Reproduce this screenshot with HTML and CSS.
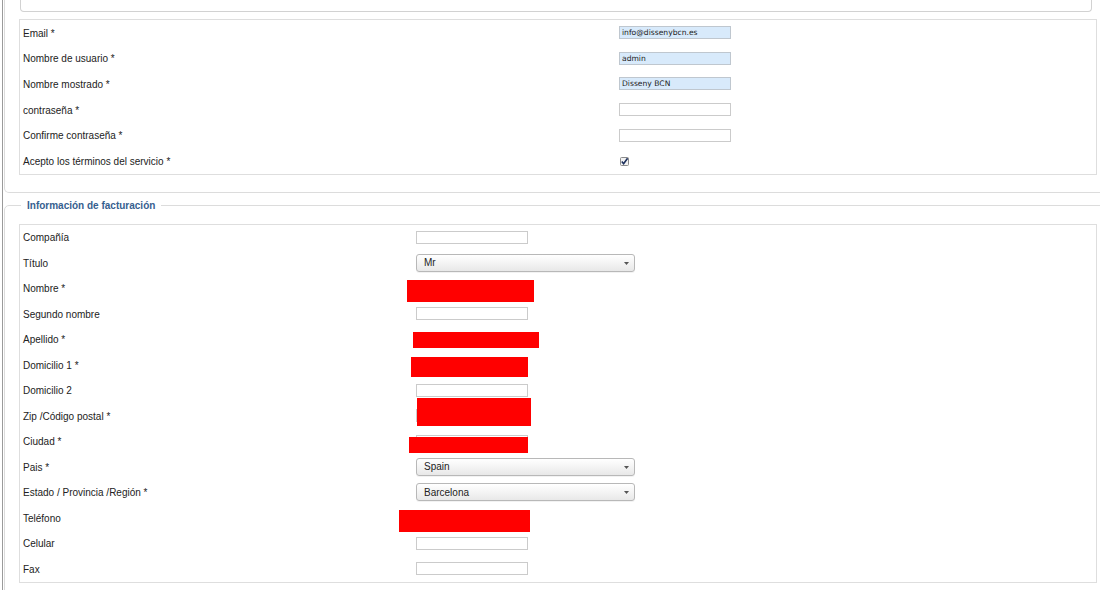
FILE: index.html
```html
<!DOCTYPE html>
<html lang="es">
    <head>
        <meta charset="UTF-8">
        <title>Registro - Disseny BCN</title>
        <link rel="stylesheet" href="styles.css">
    </head>
    <body>
        <div class="page">
            <div class="account">
                <div class="prev-box"></div>

                <div class="form-box account-rows">
                    <div class="row"><label class="label">Email *</label><div class="field"><input class="text filled" type="text" value="info@dissenybcn.es"></div></div>
                    <div class="row"><label class="label">Nombre de usuario *</label><div class="field"><input class="text filled" type="text" value="admin"></div></div>
                    <div class="row"><label class="label">Nombre mostrado *</label><div class="field"><input class="text filled" type="text" value="Disseny BCN"></div></div>
                    <div class="row"><label class="label">contraseña *</label><div class="field"><input class="text" type="password"></div></div>
                    <div class="row"><label class="label">Confirme contraseña *</label><div class="field"><input class="text" type="password"></div></div>
                    <div class="row">
                        <label class="label">Acepto los términos del servicio *</label>
                        <div class="field">
                            <span class="check">
                                <svg width="9" height="9" viewBox="0 0 9 9">
                                    <rect x="0.5" y="0.5" width="8" height="8" rx="1" fill="#f2f2f2" stroke="#8a8a8a"/>
                                    <path d="M1.8 4.6 L3.6 6.8 L7.6 1.2" fill="none" stroke="#1c2f5c" stroke-width="1.6"/>
                                </svg>
                            </span>
                        </div>
                    </div>
                </div>
            </div>

            <fieldset class="billing">
                <legend>Información de facturación</legend>
                <div class="form-box billing-rows">
                    <div class="row"><label class="label">Compañía</label><div class="field"><input class="text" type="text"></div></div>
                    <div class="row">
                        <label class="label">Título</label>
                        <div class="field">
                            <span class="select-wrap">
                                <select><option>Mr</option><option>Mrs</option><option>Ms</option></select>
                                <svg class="arrow" width="5" height="3" viewBox="0 0 5 3"><path d="M0 0 H5 L2.5 3 Z" fill="#555"/></svg>
                            </span>
                        </div>
                    </div>
                    <div class="row"><label class="label">Nombre *</label><div class="field"><input class="text" type="text"><span class="redact redact-nombre"></span></div></div>
                    <div class="row"><label class="label">Segundo nombre</label><div class="field"><input class="text" type="text"></div></div>
                    <div class="row"><label class="label">Apellido *</label><div class="field"><input class="text" type="text"><span class="redact redact-apellido"></span></div></div>
                    <div class="row"><label class="label">Domicilio 1 *</label><div class="field"><input class="text" type="text"><span class="redact redact-domicilio"></span></div></div>
                    <div class="row"><label class="label">Domicilio 2</label><div class="field"><input class="text" type="text"></div></div>
                    <div class="row"><label class="label">Zip /Código postal *</label><div class="field"><input class="text" type="text"><span class="redact redact-zip"></span></div></div>
                    <div class="row"><label class="label">Ciudad *</label><div class="field"><input class="text" type="text"><span class="redact redact-ciudad"></span></div></div>
                    <div class="row">
                        <label class="label">Pais *</label>
                        <div class="field">
                            <span class="select-wrap">
                                <select><option>Spain</option><option>France</option><option>Portugal</option></select>
                                <svg class="arrow" width="5" height="3" viewBox="0 0 5 3"><path d="M0 0 H5 L2.5 3 Z" fill="#555"/></svg>
                            </span>
                        </div>
                    </div>
                    <div class="row">
                        <label class="label">Estado / Provincia /Región *</label>
                        <div class="field">
                            <span class="select-wrap">
                                <select><option>Barcelona</option><option>Girona</option><option>Lleida</option><option>Tarragona</option></select>
                                <svg class="arrow" width="5" height="3" viewBox="0 0 5 3"><path d="M0 0 H5 L2.5 3 Z" fill="#555"/></svg>
                            </span>
                        </div>
                    </div>
                    <div class="row"><label class="label">Teléfono</label><div class="field"><input class="text" type="text"><span class="redact redact-telefono"></span></div></div>
                    <div class="row"><label class="label">Celular</label><div class="field"><input class="text" type="text"></div></div>
                    <div class="row"><label class="label">Fax</label><div class="field"><input class="text" type="text"></div></div>
                </div>
            </fieldset>
        </div>
    </body>
</html>
```

FILE: styles.css
```css
html, body {
    margin: 0;
    overflow: hidden;
    background-color: #fff;
}

body {
    font-family: "Liberation Sans", Arial, sans-serif;
    font-size: 10px;
    color: #222;
}

.page {
    margin-left: 2px;
    border-left: 1px solid #9a9a9a;
    width: 1130px;
    min-height: 600px;
}

/* first block, scrolled so only its bottom shows */
.account {
    width: 1078px;
    margin-left: 1px;
    padding: 0 14px 17px 14px;
    border: 1px solid #dcdcdc;
    border-top: none;
    border-radius: 0 0 5px 5px;
}

.prev-box {
    height: 11px;
    margin: 0 5px 0 1px;
    border: 1px solid #d2d2d2;
    border-top: none;
    border-radius: 0 0 4px 4px;
}

.form-box {
    border: 1px solid #dedede;
}

.account-rows {
    margin-top: 7px;
}

.row {
    display: flex;
    align-items: center;
}

.account-rows .row {
    height: 25.6px;
}

.billing-rows .row {
    height: 25.5px;
}

.label {
    box-sizing: border-box;
    padding: 1px 0 0 3px;
    flex-shrink: 0;
}

.account-rows .label {
    width: 599px;
}

.billing-rows .label {
    width: 396px;
}

.field {
    position: relative;
    align-self: stretch;
    display: flex;
    align-items: center;
}

.text {
    box-sizing: border-box;
    width: 112px;
    height: 13px;
    margin: 0;
    padding: 0 2px;
    border: 1px solid #cbcbcb;
    background-color: #fff;
    font-family: "DejaVu Sans", sans-serif;
    font-size: 7.6px;
    color: #222;
    outline: none;
}

.text.filled {
    background-color: #d8eafb;
    border-color: #bfc7cf;
}

.check {
    display: block;
    width: 9px;
    height: 9px;
    margin-left: 1px;
    margin-top: 1px;
}

.check svg {
    display: block;
}

.billing {
    width: 1078px;
    margin: 7px 0 0 1px;
    padding: 12px 14px 20px 14px;
    border: 1px solid #dcdcdc;
    border-radius: 5px;
}

.billing legend {
    margin-left: 2px;
    padding: 0 6px;
    font-size: 10px;
    line-height: 12px;
    font-weight: bold;
    color: #36608f;
}

.select-wrap {
    position: relative;
    display: block;
}

.select-wrap select {
    -webkit-appearance: none;
    appearance: none;
    box-sizing: border-box;
    display: block;
    width: 219px;
    height: 18px;
    margin: 0;
    padding: 0 0 0 7px;
    border: 1px solid #b8b8b8;
    border-radius: 3px;
    background: linear-gradient(#ffffff, #f4f4f4 50%, #e8e8e8);
    box-shadow: 0 1px 0 rgba(0, 0, 0, 0.05);
    font-family: "Liberation Sans", Arial, sans-serif;
    font-size: 10px;
    color: #222;
    outline: none;
}

.select-wrap .arrow {
    position: absolute;
    right: 6px;
    top: 8px;
}

/* red blocks painted over the personal data */
.redact {
    position: absolute;
    background-color: #ff0000;
}

.redact-nombre {
    left: -9px;
    top: 4px;
    width: 127px;
    height: 22px;
}

.redact-apellido {
    left: -3px;
    top: 5px;
    width: 126px;
    height: 16px;
}

.redact-domicilio {
    left: -5px;
    top: 5px;
    width: 117px;
    height: 20px;
}

.redact-zip {
    left: 1px;
    top: -5px;
    width: 114px;
    height: 28px;
}

.redact-ciudad {
    left: -7px;
    top: 8px;
    width: 119px;
    height: 16px;
}

.redact-telefono {
    left: -17px;
    top: 5px;
    width: 131px;
    height: 22px;
}
```
